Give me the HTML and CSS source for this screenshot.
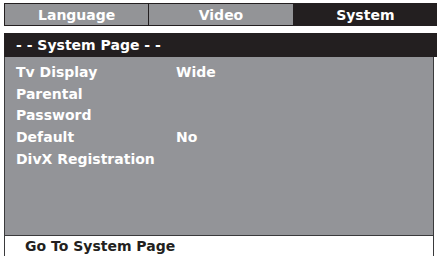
FILE: index.html
```html
<!DOCTYPE html>
<html lang="en">
<head>
  <meta charset="UTF-8">
  <title>System Setup</title>
  <link rel="stylesheet" href="styles.css">
</head>
<body>
  <div class="tabs">
    <div class="tab">Language</div>
    <div class="tab">Video</div>
    <div class="tab active">System</div>
  </div>

  <div class="page">
    <div class="page-title">- - System Page - -</div>
    <div class="menu">
      <div class="row"><span class="label">Tv Display</span><span class="value">Wide</span></div>
      <div class="row"><span class="label">Parental</span></div>
      <div class="row"><span class="label">Password</span></div>
      <div class="row"><span class="label">Default</span><span class="value">No</span></div>
      <div class="row"><span class="label">DivX Registration</span></div>
    </div>
    <div class="hint">Go To System Page</div>
  </div>
</body>
</html>
```

FILE: styles.css
```css
body {
  margin: 0;
  height: 256px;
  background: #ffffff;
  font-family: "DejaVu Sans", sans-serif;
  font-weight: bold;
  font-size: 14px;
  overflow: hidden;
}

.tabs {
  display: flex;
  margin: 3px 0 0 4px;
  height: 21px;
  border: 1px solid #231f20;
  border-right: none;
}
.tab {
  flex: 1;
  display: flex;
  align-items: center;
  justify-content: center;
  background: #939497;
  color: #ffffff;
  border-right: 1px solid #231f20;
}
.tab.active {
  background: #231f20;
  border-right: none;
}

.page {
  margin: 7px 0 0 4px;
  display: flex;
  flex-direction: column;
  height: 223px;
}
.page-title {
  background: #231f20;
  color: #ffffff;
  height: 24px;
  line-height: 24px;
  padding-left: 12px;
}
.menu {
  flex: 1;
  background: #939498;
  border-left: 1px solid #3a3a3c;
  border-right: 1px solid #3a3a3c;
  margin-right: 3px;
  padding: 5px 0 0 11px;
}
.row {
  display: flex;
  height: 21.7px;
  line-height: 21.7px;
  color: #ffffff;
}
.label {
  width: 160px;
}
.hint {
  height: 20px;
  line-height: 20px;
  border-top: 1px solid #3a3a3c;
  border-left: 1px solid #3a3a3c;
  border-right: 1px solid #3a3a3c;
  margin-right: 3px;
  padding-left: 20px;
  color: #231f20;
}
```
